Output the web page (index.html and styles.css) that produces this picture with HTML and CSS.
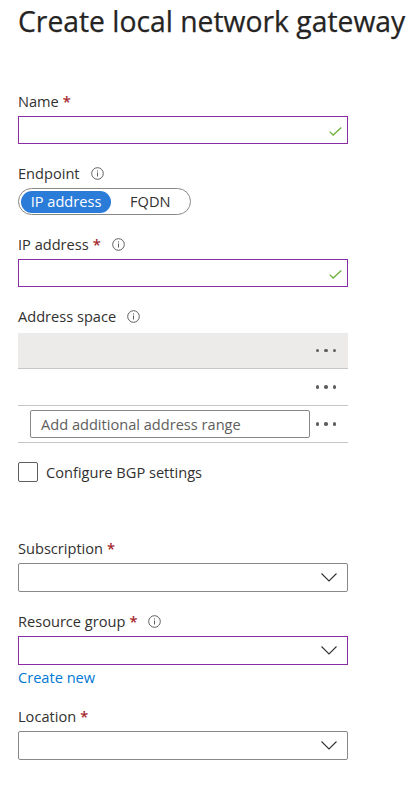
FILE: index.html
```html
<!DOCTYPE html>
<html>
<head>
<meta charset="utf-8">
<link rel="stylesheet" href="styles.css">
</head>
<body>
<div class="page">
  <h1 class="title">Create local network gateway</h1>

  <div class="field f-name">
    <div class="label">Name <span class="req">*</span></div>
    <div class="input dirty">
      <svg class="check" width="13" height="9" viewBox="0 0 13 9"><path d="M0.7 4.6 L4.2 8 L12.3 0.6" fill="none" stroke="#6bb33e" stroke-width="1.3"/></svg>
    </div>
  </div>

  <div class="field f-endpoint">
    <div class="label">Endpoint <span class="info"><svg width="13" height="13" viewBox="0 0 13 13"><circle cx="6.5" cy="6.5" r="5.8" fill="none" stroke="#605e5c" stroke-width="1"/><rect x="6" y="5.5" width="1" height="4" fill="#605e5c"/><rect x="6" y="3.4" width="1" height="1.1" fill="#605e5c"/></svg></span></div>
    <div class="toggle">
      <span class="opt on">IP address</span>
      <span class="opt">FQDN</span>
    </div>
  </div>

  <div class="field f-ip">
    <div class="label">IP address <span class="req">*</span> <span class="info"><svg width="13" height="13" viewBox="0 0 13 13"><circle cx="6.5" cy="6.5" r="5.8" fill="none" stroke="#605e5c" stroke-width="1"/><rect x="6" y="5.5" width="1" height="4" fill="#605e5c"/><rect x="6" y="3.4" width="1" height="1.1" fill="#605e5c"/></svg></span></div>
    <div class="input dirty">
      <svg class="check" width="13" height="9" viewBox="0 0 13 9"><path d="M0.7 4.6 L4.2 8 L12.3 0.6" fill="none" stroke="#6bb33e" stroke-width="1.3"/></svg>
    </div>
  </div>

  <div class="field f-space">
    <div class="label">Address space <span class="info"><svg width="13" height="13" viewBox="0 0 13 13"><circle cx="6.5" cy="6.5" r="5.8" fill="none" stroke="#605e5c" stroke-width="1"/><rect x="6" y="5.5" width="1" height="4" fill="#605e5c"/><rect x="6" y="3.4" width="1" height="1.1" fill="#605e5c"/></svg></span></div>
    <div class="list">
      <div class="row selected"><span class="dots"><i></i><i></i><i></i></span></div>
      <div class="row"><span class="dots"><i></i><i></i><i></i></span></div>
      <div class="row add">
        <div class="addinput">Add additional address range</div>
        <span class="dots"><i></i><i></i><i></i></span>
      </div>
    </div>
  </div>

  <div class="checkrow">
    <span class="box"></span>
    <span class="checklabel">Configure BGP settings</span>
  </div>

  <div class="field f-sub">
    <div class="label">Subscription <span class="req">*</span></div>
    <div class="select">
      <svg class="chev" width="16" height="9" viewBox="0 0 16 9"><path d="M0.5 0.5 L8 8 L15.5 0.5" fill="none" stroke="#323130" stroke-width="1.1"/></svg>
    </div>
  </div>

  <div class="field f-rg">
    <div class="label">Resource group <span class="req">*</span> <span class="info"><svg width="13" height="13" viewBox="0 0 13 13"><circle cx="6.5" cy="6.5" r="5.8" fill="none" stroke="#605e5c" stroke-width="1"/><rect x="6" y="5.5" width="1" height="4" fill="#605e5c"/><rect x="6" y="3.4" width="1" height="1.1" fill="#605e5c"/></svg></span></div>
    <div class="select dirty">
      <svg class="chev" width="16" height="9" viewBox="0 0 16 9"><path d="M0.5 0.5 L8 8 L15.5 0.5" fill="none" stroke="#323130" stroke-width="1.1"/></svg>
    </div>
    <a class="link">Create new</a>
  </div>

  <div class="field f-loc">
    <div class="label">Location <span class="req">*</span></div>
    <div class="select">
      <svg class="chev" width="16" height="9" viewBox="0 0 16 9"><path d="M0.5 0.5 L8 8 L15.5 0.5" fill="none" stroke="#323130" stroke-width="1.1"/></svg>
    </div>
  </div>
</div>
</body>
</html>
```

FILE: styles.css
```css
* { box-sizing: border-box; }
html, body { margin: 0; padding: 0; background: #ffffff; }
body {
  font-family: "Open Sans", "Noto Sans", sans-serif;
  color: #323130;
  font-size: 14.6px;
}
.page {
  width: 413px;
  padding: 0 0 0 18px;
}
.title {
  margin: 0;
  font-size: 28.3px;
  font-weight: 400;
  line-height: 43px;
  white-space: nowrap;
  color: #252423;
  -webkit-text-stroke: 0.25px #252423;
}
.field { display: flex; flex-direction: column; }
.label {
  height: 20px;
  line-height: 20px;
  font-size: 14.6px;
  display: flex;
  align-items: center;
  gap: 4px;
  margin-bottom: 5px;
}
.req { color: #a4262c; font-weight: 600; }
.info { display: inline-flex; margin-left: 7px; }
.f-name { margin-top: 48px; }
.f-endpoint { margin-top: 19px; }
.f-ip { margin-top: 19px; }
.f-space { margin-top: 19px; }
.f-space .label { margin-bottom: 7px; }
.input, .select {
  width: 330px;
  height: 28px;
  border: 1px solid #8a8886;
  border-radius: 2px;
  display: flex;
  align-items: center;
  justify-content: flex-end;
}
.input.dirty, .select.dirty { border-color: #8a2da5; border-radius: 0; }
.input .check { margin-right: 5px; margin-top: 2px; }
.select .chev { margin-right: 10px; }
.select { height: 29px; }
.toggle {
  width: 173px;
  height: 27px;
  border: 1px solid #8a8886;
  border-radius: 14px;
  display: flex;
  align-items: center;
  padding: 0 2px;
}
.opt {
  height: 22px;
  line-height: 21px;
  padding: 0 12px;
  border-radius: 11px;
  font-size: 14.6px;
}
.opt.on {
  background: #2b7bd8;
  color: #ffffff;
  width: 90px;
  text-align: center;
  padding: 0;
}
.opt + .opt { margin-left: 7px; }
.list { width: 330px; }
.row {
  height: 37px;
  border-bottom: 1px solid #c8c6c4;
  display: flex;
  align-items: center;
  justify-content: flex-end;
  padding-right: 12px;
}
.row.selected { background: #edebe9; height: 36px; }
.row.add { justify-content: space-between; padding-left: 12px; }
.addinput {
  width: 280px;
  height: 28px;
  border: 1px solid #8a8886;
  border-radius: 2px;
  line-height: 26px;
  padding-left: 10px;
  color: #605e5c;
  font-size: 14.6px;
}
.dots { display: inline-flex; gap: 5px; }
.dots i {
  width: 3.5px; height: 3.5px;
  border-radius: 50%;
  background: #605e5c;
  display: block;
}
.checkrow {
  margin-top: 19px;
  display: flex;
  align-items: center;
  height: 20px;
}
.box {
  width: 20px; height: 20px;
  border: 1px solid #605e5c;
  border-radius: 2px;
}
.checklabel { margin-left: 8px; font-size: 14.6px; }
.f-sub { margin-top: 56px; }
.f-rg { margin-top: 19px; }
.link {
  color: #0078d4;
  font-size: 14.6px;
  line-height: 20px;
  margin-top: 2px;
}
.f-loc { margin-top: 19px; }
```
